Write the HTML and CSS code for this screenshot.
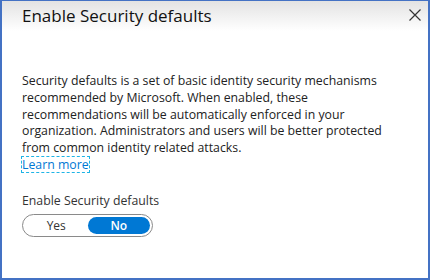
FILE: index.html
```html
<!DOCTYPE html>
<html lang="en">
<head>
  <meta charset="UTF-8" />
  <title>Enable Security defaults</title>
  <link rel="stylesheet" href="styles.css">
</head>
<body>
  <div class="panel">
    <div class="panel-header">
      <h1>Enable Security defaults</h1>
      <button class="close-button" aria-label="Close">
        <svg width="12" height="12" viewBox="0 0 12 12">
          <path d="M0.5 0.5 L11.5 11.5 M11.5 0.5 L0.5 11.5" stroke="#333" stroke-width="1.2" fill="none"/>
        </svg>
      </button>
    </div>

    <div class="panel-body">
      <p class="description">
        Security defaults is a set of basic identity security mechanisms<br>
        recommended by Microsoft. When enabled, these<br>
        recommendations will be automatically enforced in your<br>
        organization. Administrators and users will be better protected<br>
        from common identity related attacks.<br>
        <a href="#" class="learn-more">Learn more</a>
      </p>

      <div class="field">
        <label class="field-label">Enable Security defaults</label>
        <div class="toggle">
          <span class="toggle-option">Yes</span>
          <span class="toggle-option selected">No</span>
        </div>
      </div>
    </div>
  </div>
</body>
</html>
```

FILE: styles.css
```css
body {
  margin: 0;
  font-family: 'Open Sans', 'Noto Sans', sans-serif;
  background-color: white;
}

.panel {
  width: 430px;
  height: 280px;
  box-sizing: border-box;
  border: 2px solid #4472c4;
  border-top-width: 1px;
  background: white;
}

.panel-header {
  display: flex;
  justify-content: space-between;
  align-items: flex-start;
  height: 36px;
  padding: 3px 3px 0 20px;
  box-sizing: border-box;
  background: linear-gradient(to bottom, #e3e3e3, #ffffff 30px);
}

h1 {
  margin: 0;
  font-size: 17px;
  font-weight: 400;
  color: #111;
}

.close-button {
  border: none;
  background: none;
  padding: 4px;
  margin-top: 1px;
  display: flex;
}

.panel-body {
  padding: 36px 20px 0;
}

.description {
  margin: 0;
  font-size: 12.3px;
  line-height: 16.8px;
  color: #222;
}

.learn-more {
  display: inline-block;
  color: #0078d4;
  text-decoration: none;
  outline: 1px dashed #1eb4e6;
  outline-offset: 0;
  line-height: 15px;
}

.field {
  margin-top: 18px;
}

.field-label {
  display: block;
  font-size: 12.3px;
  color: #333;
  margin-bottom: 5px;
}

.toggle {
  display: flex;
  width: 131px;
  height: 23px;
  box-sizing: border-box;
  padding: 2px;
  border: 1px solid #8a8a8a;
  border-radius: 12px;
}

.toggle-option {
  flex: 1;
  display: flex;
  justify-content: center;
  align-items: center;
  font-size: 12px;
  color: #333;
  border-radius: 10px;
}

.toggle-option.selected {
  background-color: #0078d4;
  color: white;
  font-weight: 600;
}
```
